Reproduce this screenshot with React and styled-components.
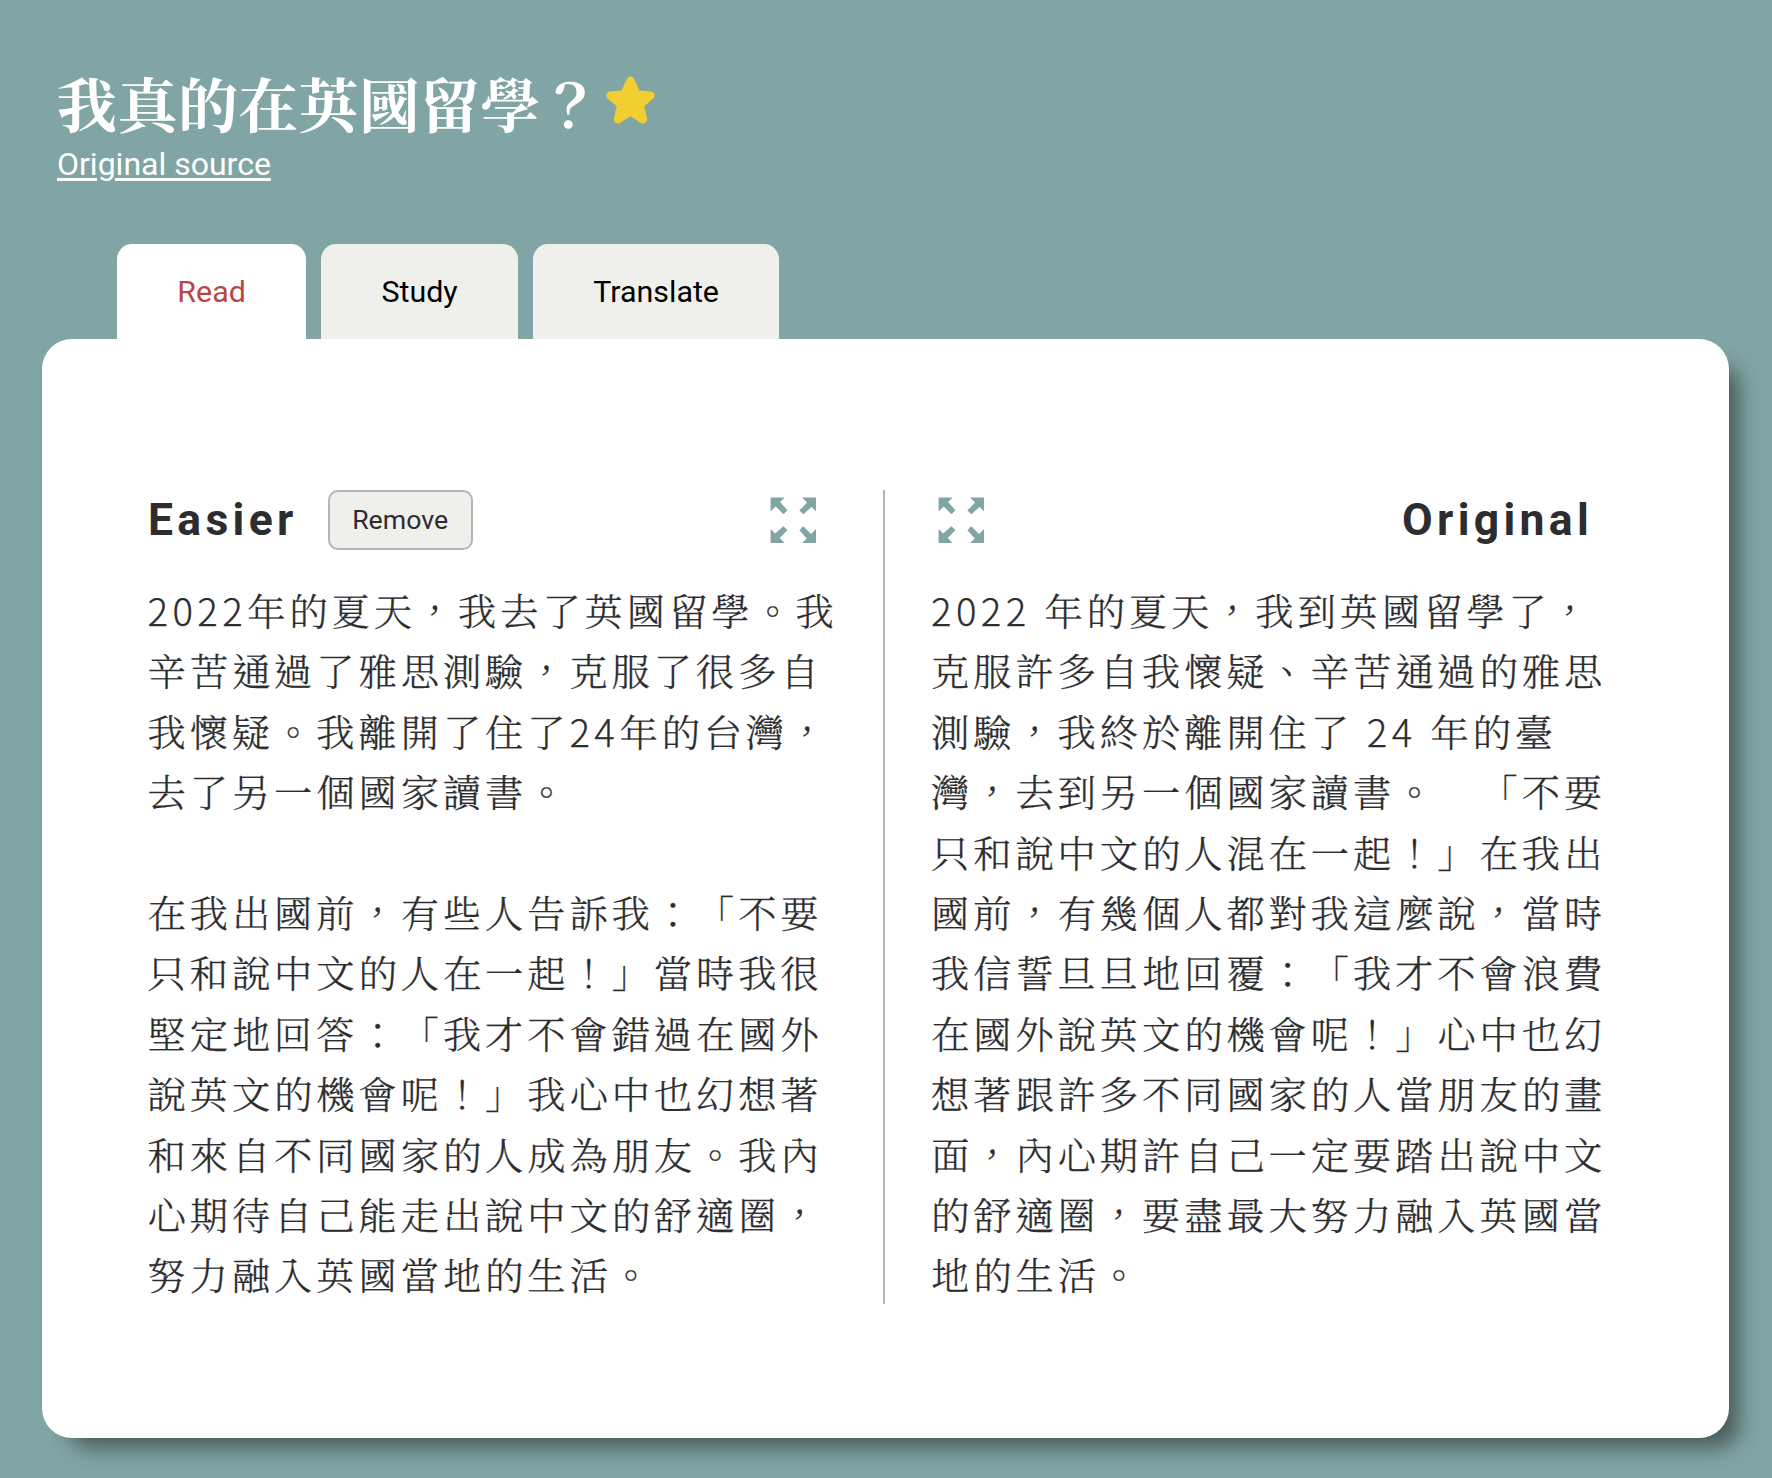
import React from "react";
import styled, { createGlobalStyle } from "styled-components";

const serif = '"Noto Serif TC", "Noto Serif CJK TC", "Source Han Serif TC", "Noto Sans CJK TC", serif';

const Global = createGlobalStyle`
  * { box-sizing: border-box; }
  body { margin: 0; background: #80a5a4; font-family: Roboto, ${serif}; color: #2d2d2f; }
`;
const Page = styled.main`
  min-height: 1478px;
  padding: 64px 43px 40px 42px;
`;
const Header = styled.header`
  height: 180px;
  padding-left: 15px;
  color: #fff;
`;
const TitleRow = styled.div`
  display: flex;
  align-items: flex-start;
  height: 80px;
`;
const Title = styled.h1`
  margin: 0;
  width: 541px;
  font: 700 60px/76px ${serif};
  letter-spacing: 0.45px;
  white-space: nowrap;
`;
const Star = styled.svg`
  display: block;
  width: 49px;
  height: 48px;
  margin: 12px 0 0 8px;
  fill: #f2cf30;
`;
const Source = styled.a`
  display: inline-block;
  font-size: 32px;
  line-height: 40px;
  text-decoration: underline;
  text-decoration-thickness: 3px;
  text-underline-offset: 3px;
`;
const Tabs = styled.nav`
  display: flex;
  gap: 15px;
  padding-left: 75px;
`;
const Tab = styled.button`
  height: 95px;
  padding: 0 60.3px;
  border: 0;
  border-radius: 15px 15px 0 0;
  background: ${(p) => (p.$active ? "#fff" : "#eff0eb")};
  color: ${(p) => (p.$active ? "#b94646" : "#000")};
  font: 400 30.4px Roboto, sans-serif;
`;
const Card = styled.section`
  display: flex;
  height: 1099px;
  padding: 151px 0 134px 106px;
  border-radius: 30px;
  background: #fff;
  box-shadow: 18px 18px 20px -8px rgba(0, 0, 0, 0.44);
`;
const Column = styled.article`
  width: ${(p) => p.$width}px;
  padding-left: ${(p) => p.$indent || 0}px;
  border-right: ${(p) => (p.$divided ? "2px solid #b5b5b5" : "0")};
`;
const ColumnHead = styled.div`
  display: flex;
  align-items: center;
  height: 60px;
  padding-right: ${(p) => p.$end}px;
  padding-left: ${(p) => p.$start || 0}px;
`;
const Heading = styled.h2`
  margin: 0;
  font: 700 44.5px/60px Roboto, sans-serif;
  letter-spacing: 4.3px;
`;
const Remove = styled.button`
  width: 145px;
  height: 60px;
  margin-left: 30px;
  padding: 0;
  border: 2px solid #b5b5b5;
  border-radius: 10px;
  background: #eff0eb;
  color: #2d2d2f;
  font: 400 26.7px Roboto, sans-serif;
`;
const Grow = styled.span`
  flex: 1;
`;
const ExpandIcon = styled.svg`
  display: block;
  width: 46px;
  height: 46px;
  fill: #80a5a4;
`;
const Passage = styled.p`
  margin: 30px 0 0 ${(p) => p.$shift || 0}px;
  font: 300 38.3px/60.4px ${serif};
  letter-spacing: 3.9px;
  text-spacing-trim: space-all;
  white-space: pre;
  -webkit-text-stroke: 0.25px #2d2d2f;
`;
const Digits = styled.span`
  font-family: "Noto Sans CJK TC", sans-serif;
  line-height: 40px;
  letter-spacing: 4.4px;
`;

const Expand = () => (
  <ExpandIcon viewBox="0 0 46 46">
    {[0, 90, 180, 270].map((a) => (
      <path key={a} transform={`translate(0.4 0.2) rotate(${a} 23 23)`} d="M0.2 0.2H14.3L9.7 4.8L17 13L13.2 17L5.3 9.3L0.2 14.3Z" />
    ))}
  </ExpandIcon>
);

const Story = ({ text, shift }) => (
  <Passage $shift={shift}>
    {text.split(/(\d+)/).map((part, i) => (i % 2 ? <Digits key={i}>{part}</Digits> : part))}
  </Passage>
);

const easier = `2022年的夏天，我去了英國留學。我
辛苦通過了雅思測驗，克服了很多自
我懷疑。我離開了住了24年的台灣，
去了另一個國家讀書。

在我出國前，有些人告訴我：「不要
只和說中文的人在一起！」當時我很
堅定地回答：「我才不會錯過在國外
說英文的機會呢！」我心中也幻想著
和來自不同國家的人成為朋友。我內
心期待自己能走出說中文的舒適圈，
努力融入英國當地的生活。`;

const original = `2022 年的夏天，我到英國留學了，
克服許多自我懷疑、辛苦通過的雅思
測驗，我終於離開住了 24 年的臺
灣，去到另一個國家讀書。　「不要
只和說中文的人混在一起！」在我出
國前，有幾個人都對我這麼說，當時
我信誓旦旦地回覆：「我才不會浪費
在國外說英文的機會呢！」心中也幻
想著跟許多不同國家的人當朋友的畫
面，內心期許自己一定要踏出說中文
的舒適圈，要盡最大努力融入英國當
地的生活。`;

export default function App() {
  return (
    <Page lang="zh-TW">
      <Global />
      <Header>
        <TitleRow>
          <Title>我真的在英國留學？</Title>
          <Star viewBox="0 0 49 48">
            <path d="M21.1 2.4Q24.5-1.9 27.9 2.4L33.6 14.4L45.2 15.4Q50.6 17.4 47.6 22.2L38.3 30.2L41.2 42.8Q40.6 48.4 35.4 47.2L24.5 40.3L13.6 47.2Q8.4 48.4 7.8 42.8L10.7 30.2L1.4 22.2Q-1.6 17.4 3.8 15.4L15.4 14.4Z" />
          </Star>
        </TitleRow>
        <Source>Original source</Source>
      </Header>
      <Tabs>
        <Tab $active>Read</Tab>
        <Tab>Study</Tab>
        <Tab>Translate</Tab>
      </Tabs>
      <Card>
        <Column $width={737} $divided>
          <ColumnHead $end={67}>
            <Heading>Easier</Heading>
            <Remove>Remove</Remove>
            <Grow />
            <Expand />
          </ColumnHead>
          <Story shift={-0.5} text={easier} />
        </Column>
        <Column $width={780} $indent={46}>
          <ColumnHead $start={7} $end={72}>
            <Expand />
            <Grow />
            <Heading>Original</Heading>
          </ColumnHead>
          <Story text={original} />
        </Column>
      </Card>
    </Page>
  );
}
